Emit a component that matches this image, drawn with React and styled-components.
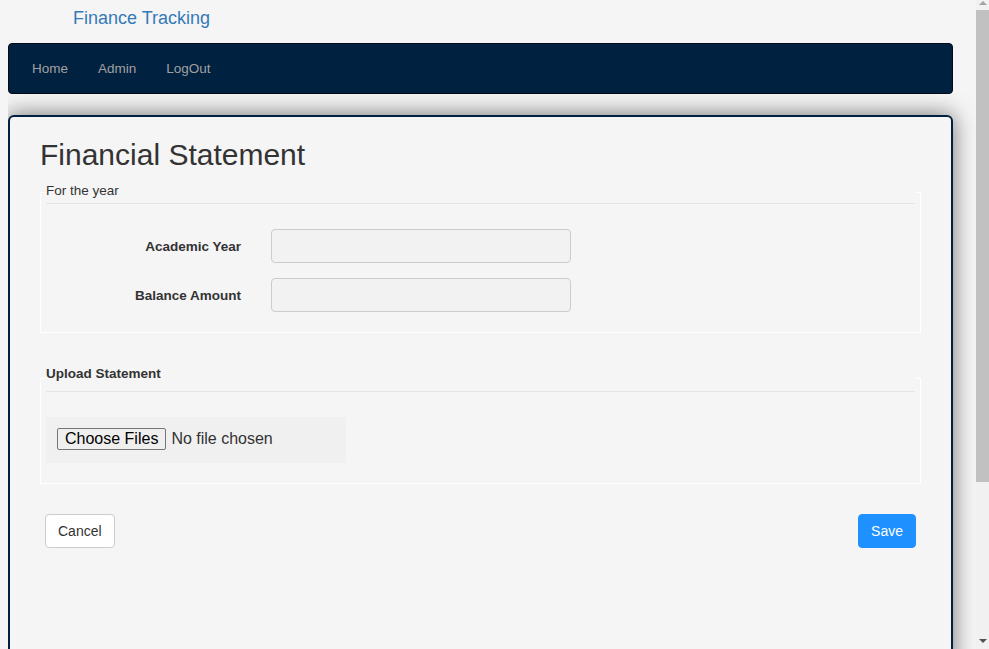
import React from "react";
import styled, { createGlobalStyle } from "styled-components";

const GlobalStyle = createGlobalStyle`
  html { background: #f5f5f5; }
  body {
    margin: 8px;
    background: #f5f5f5;
    font-family: "Liberation Sans", Arial, Helvetica, sans-serif;
    color: #333;
  }
  * { box-sizing: border-box; }
`;

const Page = styled.div`
  margin-right: 28px;
  display: flex;
  flex-direction: column;
`;

const Brand = styled.a`
  display: block;
  height: 35px;
  padding-left: 65px;
  font-size: 18px;
  line-height: 20px;
  color: #337ab7;
  text-decoration: none;
`;

const Navbar = styled.nav`
  height: 51px;
  background: #012141;
  border: 1px solid #000c18;
  border-radius: 4px;
  display: flex;
  align-items: stretch;
  padding-left: 8px;
`;

const NavLink = styled.a`
  display: flex;
  align-items: center;
  padding: 0 15px;
  font-size: 13.5px;
  line-height: 20px;
  color: #a0a0a0;
  text-decoration: none;
`;

const Card = styled.main`
  margin-top: 21px;
  min-height: 741px;
  background: #f5f5f5;
  border: 2px solid #012141;
  border-radius: 6px;
  box-shadow: 0 0 22px 1px rgba(0, 0, 0, 0.5);
  padding: 21px 30px 0;
  display: flex;
  flex-direction: column;
`;

const Title = styled.h2`
  margin: 0;
  font-size: 30px;
  line-height: 33px;
  font-weight: 400;
  color: #333;
`;

const Fieldset = styled.fieldset`
  margin: ${(p) => p.$top}px 0 0;
  padding: 0 5px 20px;
  border: 1px solid #fff;
  min-width: 0;
`;

const Legend = styled.legend`
  width: 100%;
  padding: 0 0 ${(p) => p.$pb}px;
  margin: 0 0 25px;
  font-size: 13.5px;
  line-height: 20px;
  font-weight: ${(p) => (p.$bold ? 700 : 400)};
  color: #333;
  border-bottom: 1px solid #e5e5e5;
`;

const FormGrid = styled.div`
  display: grid;
  grid-template-columns: 195px 300px;
  column-gap: 30px;
  row-gap: 15px;
  align-items: center;
`;

const Label = styled.label`
  text-align: right;
  font-size: 13.5px;
  font-weight: 700;
  color: #333;
`;

const TextInput = styled.input`
  height: 34px;
  width: 300px;
  background: #f2f2f2;
  border: 1px solid #ccc;
  border-radius: 4px;
  padding: 6px 12px;
  font-size: 14px;
  font-family: inherit;
`;

const FileInput = styled.input`
  display: block;
  width: 300px;
  height: 46px;
  padding: 11px;
  background: #f0f0f0;
  font-size: 16px;
  font-family: "Liberation Sans", Arial, sans-serif;
  color: #333;

  &::file-selector-button {
    font-size: 16px;
    font-family: "Liberation Sans", Arial, sans-serif;
    padding: 1px 7px;
    margin-right: 5px;
    background: #efefef;
    border: 1px solid #767676;
    border-radius: 2px;
    color: #000;
  }
`;

const Actions = styled.div`
  margin: 30px 5px 0;
  display: flex;
  justify-content: space-between;
`;

const Button = styled.button`
  height: 34px;
  padding: 6px 12px;
  font-size: 14px;
  line-height: 20px;
  font-family: inherit;
  border-radius: 4px;
  border: 1px solid ${(p) => (p.$primary ? "#1e90ff" : "#ccc")};
  background: ${(p) => (p.$primary ? "#1e90ff" : "#fff")};
  color: ${(p) => (p.$primary ? "#fff" : "#333")};
`;

/* Window scrollbar, drawn over the right edge of the page */
const ScrollBar = styled.div`
  position: fixed;
  top: 0;
  right: 0;
  bottom: 0;
  width: 13px;
  background: #f1f1f1;
  display: flex;
  flex-direction: column;
`;

const Arrow = styled.div`
  height: 10px;
  flex: none;
  display: flex;
  justify-content: center;
  align-items: ${(p) => (p.$down ? "flex-end" : "flex-start")};
  padding: ${(p) => (p.$down ? "0 0 6px" : "1px 0 0")};

  &::before {
    content: "";
    width: 0;
    height: 0;
    border-left: 4px solid transparent;
    border-right: 4px solid transparent;
    ${(p) =>
      p.$down
        ? "border-top: 4px solid #505050;"
        : "border-bottom: 4px solid #a3a3a3;"}
  }
`;

const Thumb = styled.div`
  height: 472px;
  flex: none;
  background: #c1c1c1;
`;

const Track = styled.div`
  flex: 1;
`;

export default function App() {
  return (
    <>
      <GlobalStyle />
      <Page>
        <Brand href="#">Finance Tracking</Brand>
        <Navbar>
          <NavLink href="#">Home</NavLink>
          <NavLink href="#">Admin</NavLink>
          <NavLink href="#">LogOut</NavLink>
        </Navbar>
        <Card>
          <Title>Financial Statement</Title>
          <Fieldset $top={10}>
            <Legend $pb={2}>For the year</Legend>
            <FormGrid>
              <Label>Academic Year</Label>
              <TextInput type="text" />
              <Label>Balance Amount</Label>
              <TextInput type="text" />
            </FormGrid>
          </Fieldset>
          <Fieldset $top={31}>
            <Legend $pb={7} $bold>
              Upload Statement
            </Legend>
            <FileInput type="file" multiple />
          </Fieldset>
          <Actions>
            <Button>Cancel</Button>
            <Button $primary>Save</Button>
          </Actions>
        </Card>
      </Page>
      <ScrollBar aria-hidden="true">
        <Arrow />
        <Thumb />
        <Track />
        <Arrow $down />
      </ScrollBar>
    </>
  );
}
